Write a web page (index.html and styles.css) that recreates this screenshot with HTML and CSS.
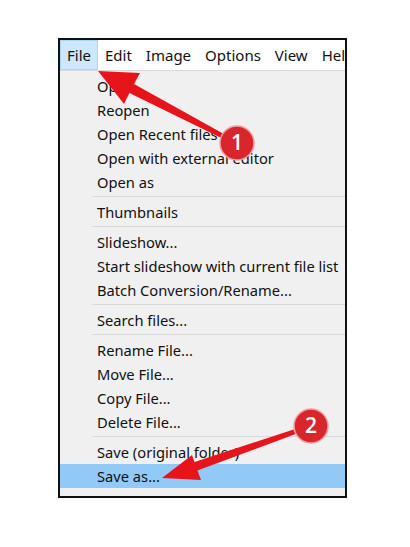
FILE: index.html
```html
<!DOCTYPE html>
<html lang="en">
<head>
    <meta charset="utf-8" />
    <title>File menu</title>
    <link rel="stylesheet" href="styles.css">
</head>
<body>
    <div class="shot">
        <div class="menubar">
            <span class="barItem active">File</span>
            <span class="barItem">Edit</span>
            <span class="barItem">Image</span>
            <span class="barItem">Options</span>
            <span class="barItem">View</span>
            <span class="barItem">Help</span>
        </div>
        <ul class="menu">
            <li>Open</li>
            <li>Reopen</li>
            <li>Open Recent files</li>
            <li>Open with external editor</li>
            <li>Open as</li>
            <li class="sep"></li>
            <li>Thumbnails</li>
            <li class="sep"></li>
            <li>Slideshow...</li>
            <li>Start slideshow with current file list</li>
            <li>Batch Conversion/Rename...</li>
            <li class="sep"></li>
            <li>Search files...</li>
            <li class="sep"></li>
            <li>Rename File...</li>
            <li>Move File...</li>
            <li>Copy File...</li>
            <li>Delete File...</li>
            <li class="sep"></li>
            <li>Save (original folder)</li>
            <li class="hover">Save as...</li>
        </ul>
    </div>

    <!-- annotation arrows drawn over the screenshot -->
    <svg class="annot" width="410" height="547" viewBox="0 0 410 547">
        <polygon class="arrow" points="98,71 140,73 134,84 236.9,141.2 235.1,144.8 129.4,93 124,104" />
        <circle class="badge" cx="237" cy="143" r="17" />
        <text class="num" x="237" y="150">1</text>

        <polygon class="arrow" points="162,478 192,455 194.5,462 310.3,424.1 311.7,427.9 197.5,470.6 201,480" />
        <circle class="badge" cx="311" cy="426" r="17" />
        <text class="num" x="311" y="433">2</text>
    </svg>
</body>
</html>
```

FILE: styles.css
```css
html,
body {
    margin: 0;
    padding: 0;
    background: white;
}

body {
    width: 410px;
    height: 547px;
    position: relative;
    font-family: "Noto Sans", "Open Sans", sans-serif;
    font-size: 14.7px;
    color: #111;
}

.shot {
    margin: 38px 0 0 58px;
    width: 285px;
    height: 456px;
    border: 2px solid #111;
    overflow: hidden;
    background: #f0f0f0;
}

.menubar {
    display: flex;
    height: 30px;
    background: white;
    border-bottom: 1px solid #dadada;
    white-space: nowrap;
    font-size: 15px;
}

.barItem {
    padding: 0 7px;
    line-height: 30px;
}

.barItem.active {
    background: #cce8ff;
    box-shadow: inset 0 0 0 1px #a8d6fb;
}

.menu {
    list-style: none;
    margin: 0;
    padding: 3px 0 0;
}

.menu li {
    height: 24px;
    line-height: 24px;
    padding-left: 37px;
    white-space: nowrap;
}

.menu li.sep {
    height: 1px;
    margin: 2px 0 3px 32px;
    padding: 0;
    background: #d9d9d9;
}

.menu li.hover {
    background: #91c9f7;
}

.annot {
    position: absolute;
    left: 0;
    top: 0;
}

.arrow {
    fill: #e8141c;
}

.badge {
    fill: #d8262c;
    stroke: #f3a0a0;
    stroke-width: 1.5;
}

.num {
    fill: white;
    font-family: "Open Sans", sans-serif;
    font-size: 21px;
    font-weight: 600;
    text-anchor: middle;
}
```
